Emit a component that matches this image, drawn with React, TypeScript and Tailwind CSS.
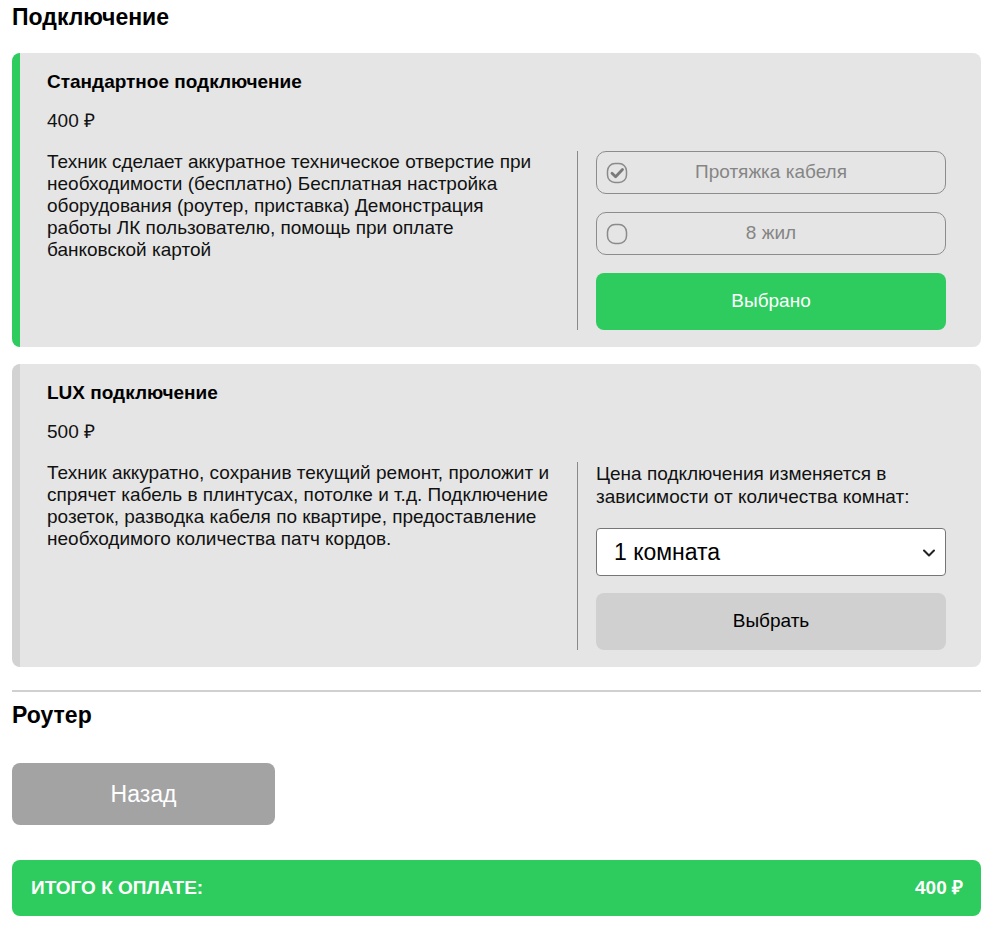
import React from 'react';

const CheckIcon = ({ checked }: { checked: boolean }) => (
  <svg width="22" height="22" viewBox="0 0 22 22" fill="none">
    <rect x="1.5" y="1.5" width="19" height="19" rx="7.5" stroke="#8a8a8a" strokeWidth="1.5" />
    {checked && (
      <path d="M6 11.2l3.6 3.6L16.5 7.5" stroke="#7a7a7a" strokeWidth="2.8" strokeLinecap="round" strokeLinejoin="round" />
    )}
  </svg>
);

const Option = ({ label, checked }: { label: string; checked: boolean }) => (
  <div className="relative flex h-[43px] items-center justify-center rounded-[10px] border border-[#8c8c8c] text-[19px] text-[#858585]">
    <span className="absolute left-[9px] top-[10px]">
      <CheckIcon checked={checked} />
    </span>
    {label}
  </div>
);

const Card = ({
  title,
  price,
  text,
  active,
  children,
}: {
  title: string;
  price: string;
  text: string;
  active: boolean;
  children: React.ReactNode;
}) => (
  <div
    className={`rounded-lg border-l-8 bg-[#e5e5e5] pb-[17px] pl-[27px] pr-[35px] pt-[18px] ${
      active ? 'border-[#2ecc5e]' : 'border-[#d2d2d2]'
    }`}
  >
    <h3 className="text-[19px] font-bold leading-[22px] text-black">{title}</h3>
    <p className="mt-[17px] text-[19px] leading-[22px]">{price}</p>
    <div className="mt-[19px] flex">
      <div className="flex-1 border-r border-[#8a8a8a]">
        <p className="w-[504px] text-[19px] leading-[22px]">{text}</p>
      </div>
      <div className="w-[368px] pl-[18px]">{children}</div>
    </div>
  </div>
);

const App = () => {
  return (
    <div className="bg-white px-3 pb-3 font-[Liberation_Sans,Arial,sans-serif] text-[#111]">
      <h2 className="pt-[4px] text-[23px] font-bold leading-[26px] text-black">Подключение</h2>

      <div className="mt-[23px] flex flex-col gap-[17px]">
        <Card
          active
          title="Стандартное подключение"
          price="400 ₽"
          text="Техник сделает аккуратное техническое отверстие при необходимости (бесплатно) Бесплатная настройка оборудования (роутер, приставка) Демонстрация работы ЛК пользователю, помощь при оплате банковской картой"
        >
          <div className="flex flex-col gap-[18px]">
            <Option label="Протяжка кабеля" checked />
            <Option label="8 жил" checked={false} />
            <button
              type="button"
              className="h-[57px] rounded-lg bg-[#2ecc5e] text-[19px] text-white"
            >
              Выбрано
            </button>
          </div>
        </Card>

        <Card
          active={false}
          title="LUX подключение"
          price="500 ₽"
          text="Техник аккуратно, сохранив текущий ремонт, проложит и спрячет кабель в плинтусах, потолке и т.д. Подключение розеток, разводка кабеля по квартире, предоставление необходимого количества патч кордов."
        >
          <p className="text-[19px] leading-[23px]">
            Цена подключения изменяется в зависимости от количества комнат:
          </p>
          <div className="relative mt-[20px] flex h-[48px] items-center rounded border border-[#767676] bg-white pl-[17px] text-[23px] text-black">
            1 комната
            <svg className="absolute right-[8px] top-[16px]" width="16" height="16" viewBox="0 0 16 16" fill="none">
              <path d="M3 5.5l5 5 5-5" stroke="#222" strokeWidth="2" strokeLinecap="round" strokeLinejoin="round" />
            </svg>
          </div>
          <button
            type="button"
            className="mt-[17px] h-[57px] w-full rounded-lg bg-[#d0d0d0] text-[19px] text-black"
          >
            Выбрать
          </button>
        </Card>
      </div>

      <hr className="mt-[23px] border-t-2 border-[#d0d0d0]" />
      <h2 className="mt-[10px] text-[23px] font-bold leading-[26px] text-black">Роутер</h2>

      <button
        type="button"
        className="mt-[35px] h-[62px] w-[263px] rounded-lg bg-[#a3a3a3] text-[23px] text-white"
      >
        Назад
      </button>

      <div className="mt-[35px] flex h-[56px] items-center justify-between rounded-lg bg-[#2ecc5e] pl-[19px] pr-[18px] text-[19px] font-bold text-white">
        <span>ИТОГО К ОПЛАТЕ:</span>
        <span>400 ₽</span>
      </div>
    </div>
  );
};

export default App;
